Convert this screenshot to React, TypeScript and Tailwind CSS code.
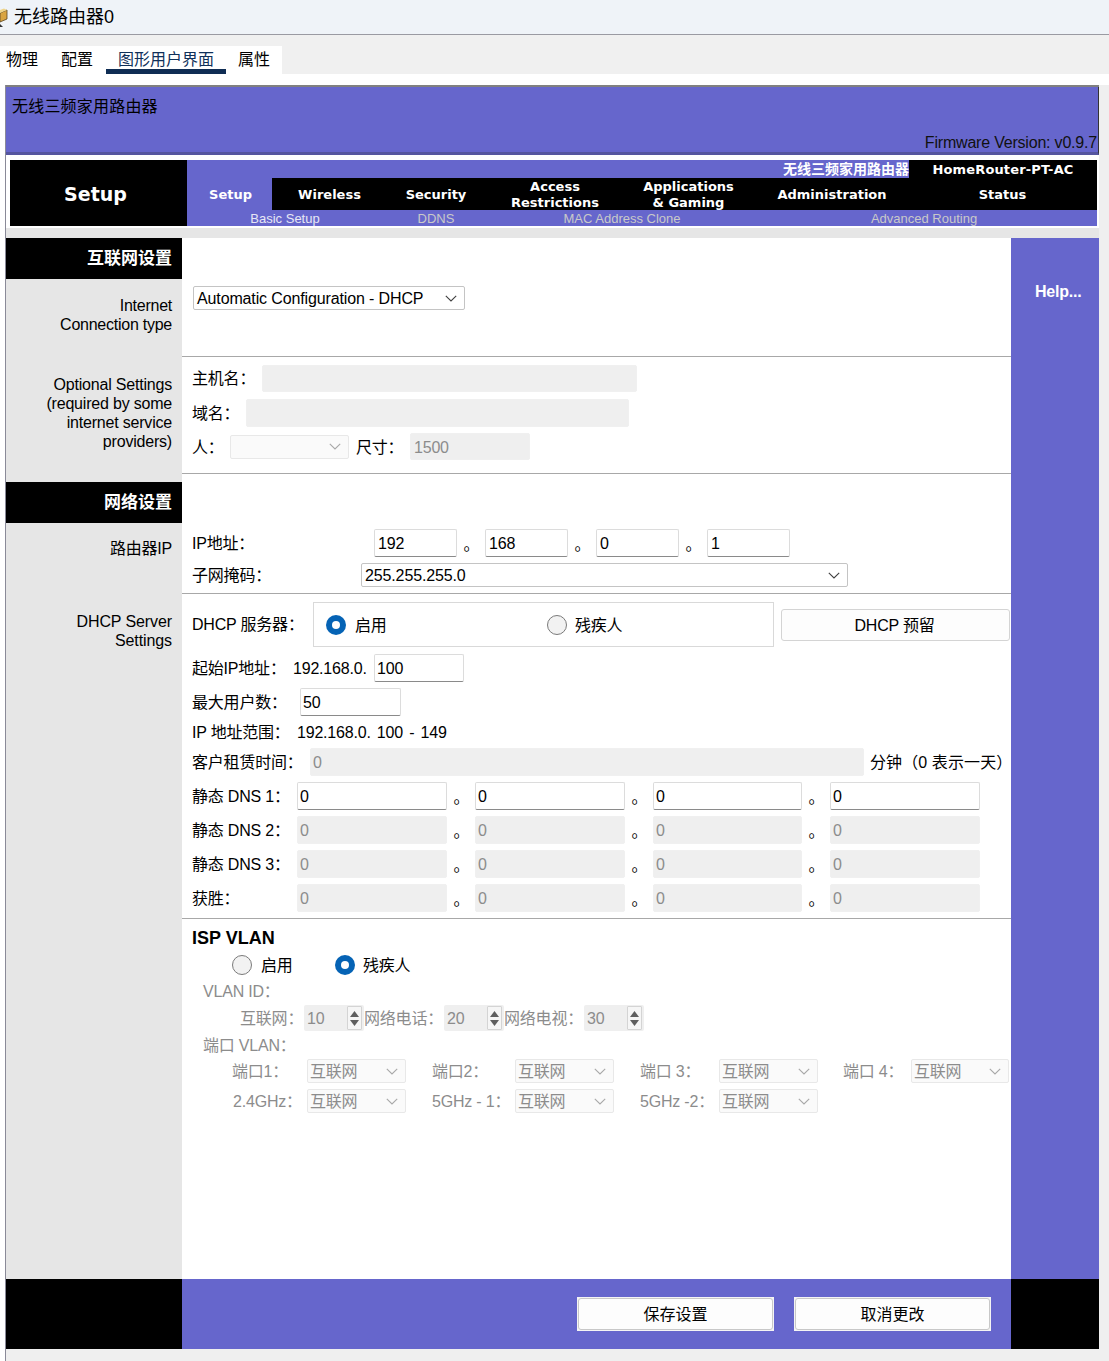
import React from "react";

const FONT = "[font-family:'Liberation_Sans','Noto_Sans_CJK_SC',sans-serif]";

function Field({ value, w, disabled, h = "h-[28px]", pad = "pl-[2px]" }: { value?: string; w: string; disabled?: boolean; h?: string; pad?: string }) {
  return (
    <input
      readOnly
      value={value ?? ""}
      className={`${w} ${h} ${pad} shrink-0 rounded-[2px] border pt-[2px] text-[16px] outline-none ${
        disabled
          ? "border-[#f0f0f0] bg-[#efefef] text-[#8c8c8c]"
          : "border-[#dcdcdc] border-b-[#8a8a8a] bg-white text-black"
      }`}
    />
  );
}

function Chevron({ color }: { color: string }) {
  return (
    <svg width="12" height="7" viewBox="0 0 12 7" fill="none" stroke={color} strokeWidth="1.1" className="shrink-0">
      <path d="M0.8 0.8 L6 6 L11.2 0.8" />
    </svg>
  );
}

function Select({ value, w, disabled, h = "h-[24px]" }: { value?: string; w: string; disabled?: boolean; h?: string }) {
  return (
    <div
      className={`${w} ${h} flex shrink-0 items-center justify-between rounded-[2px] border pr-[7px] ${
        disabled ? "border-[#e8e8e8] bg-[#fafafa] pl-[2px] text-[#8c8c8c]" : "border-[#c4c4c4] bg-white pl-[3px] tracking-[-0.13px] text-black"
      }`}
    >
      <span>{value}</span>
      <Chevron color={disabled ? "#a8a8a8" : "#404040"} />
    </div>
  );
}

function Radio({ on }: { on?: boolean }) {
  return on ? (
    <span className="flex h-[20px] w-[20px] shrink-0 items-center justify-center rounded-full bg-[#0563b5]">
      <span className="h-[8px] w-[8px] rounded-full bg-white" />
    </span>
  ) : (
    <span className="h-[20px] w-[20px] shrink-0 rounded-full border border-[#7a7a7a] bg-[#f2f2f2]" />
  );
}

function Dot() {
  return <span className="w-[28px] shrink-0 pl-[1px] pt-[4px] text-center leading-none">。</span>;
}

function DnsRow({ label, disabled, v = "0" }: { label: string; disabled?: boolean; v?: string }) {
  return (
    <div className="mt-[6px] flex h-[28px] items-center">
      <span className="w-[105px] shrink-0">{label}</span>
      <Field value={v} w="w-[150px]" disabled={disabled} />
      <Dot />
      <Field value={v} w="w-[150px]" disabled={disabled} />
      <Dot />
      <Field value={v} w="w-[149px]" disabled={disabled} />
      <Dot />
      <Field value={v} w="w-[150px]" disabled={disabled} />
    </div>
  );
}

function Spinner({ value }: { value: string }) {
  return (
    <div className="flex h-[26px] w-[60px] shrink-0 items-center justify-between rounded-[2px] bg-[#efefef] pl-[3px] pr-[2px] text-[#8c8c8c]">
      <span>{value}</span>
      <span className="flex h-[24px] w-[15px] flex-col items-center justify-center gap-[3px] rounded-[1px] border border-[#d4d4d4] bg-[#f6f6f6]">
        <svg width="9" height="6" viewBox="0 0 9 6" fill="#5f5f5f"><path d="M4.5 0 L9 6 L0 6 Z" /></svg>
        <svg width="9" height="6" viewBox="0 0 9 6" fill="#5f5f5f"><path d="M0 0 L9 0 L4.5 6 Z" /></svg>
      </span>
    </div>
  );
}

function SideHead({ children }: { children: React.ReactNode }) {
  return (
    <div className="flex h-[41px] items-center justify-end bg-black pr-[10px] text-[17px] font-bold tracking-normal text-white">{children}</div>
  );
}

function PortRow({ items, cls }: { items: [string, string][]; cls: string }) {
  const widths = ["w-[75px]", "w-[83px]", "w-[79px]", "w-[68px]"];
  const gaps = ["w-[26px]", "w-[26px]", "w-[25px]", "w-0"];
  return (
    <div className={`${cls} flex h-[24px] items-center pl-[40px] text-[#8c8c8c]`}>
      {items.map(([l, v], i) => (
        <React.Fragment key={l}>
          <span className={`${widths[i]} shrink-0`}>{l}</span>
          <Select value={v} w={i === 3 ? "w-[98px]" : "w-[99px]"} disabled />
          <span className={`${gaps[i]} shrink-0`} />
        </React.Fragment>
      ))}
    </div>
  );
}

function Tab({ w, children, active, cls = "" }: { w: string; children: React.ReactNode; active?: boolean; cls?: string }) {
  return (
    <div
      className={`${w} ${cls} flex shrink-0 items-center justify-center pt-[2px] text-center text-[13px] font-bold leading-[16px] tracking-normal text-white [font-family:'DejaVu_Sans',sans-serif] ${
        active ? "bg-[#6666cc]" : "bg-black"
      }`}
    >
      <span>{children}</span>
    </div>
  );
}

function FootButton({ children }: { children: React.ReactNode }) {
  return (
    <button className="h-[34px] w-[197px] bg-[#f4f4f4] p-[1px] text-[16px] tracking-normal">
      <span className="flex h-full w-full items-center justify-center rounded-[3px] border border-[#c8c8c8] bg-[#fdfdfd]">{children}</span>
    </button>
  );
}

export default function App() {
  return (
    <div className={`${FONT} h-[1361px] w-[1109px] overflow-hidden bg-white text-[16px] leading-[19px] tracking-[-0.2px] text-black`}>
      {/* window title */}
      <div className="flex h-[35px] items-center border-b border-[#9a9aa2] bg-[#eff3f8] text-[18px] tracking-normal">
        <svg width="14" height="22" viewBox="0 0 14 22" className="mt-[2px] shrink-0">
          <path d="M0 6 L7 3 L7 12 L0 15 Z" fill="#d9a441" stroke="#5a4520" strokeWidth="0.8" />
          <path d="M0 6 L7 3 L4 1.5 L0 3 Z" fill="#f0d58a" />
          <path d="M0 17 L3 20 L0 20 Z" fill="#333" />
        </svg>
        <span>无线路由器0</span>
      </div>

      {/* tabs */}
      <div className="h-[11px] bg-[#f0f0f0]" />
      <div className="flex h-[28px] bg-[#f0f0f0] tracking-normal">
        <div className="flex w-[282px] bg-white pl-[6px]">
          <span className="w-[55px] pt-[4px]">物理</span>
          <span className="w-[45px] pt-[4px]">配置</span>
          <span className="h-[28px] w-[120px] border-b-[5px] border-[#0f2d54] pl-[12px] pt-[4px] text-[#10305a]">图形用户界面</span>
          <span className="pl-[12px] pt-[4px]">属性</span>
        </div>
      </div>
      <div className="h-[11px] bg-white" />

      {/* device panel */}
      <div className="ml-[5px] h-[1276px] border-l border-[#8a8a98] bg-[#efefef]">
        <div className="w-[1093px] bg-white">
          <div className="border-t-2 border-[#808080]">
            <div className="flex h-[68px] flex-col justify-between border-b-[3px] border-r border-b-[#55559f] border-r-[#333] bg-[#6666cc] pl-[6px] pr-[1px]">
              <span className="pt-[10px] tracking-[0.2px]">无线三频家用路由器</span>
              <span className="self-end text-[#111]">Firmware Version: v0.9.7</span>
            </div>
          </div>

          {/* nav */}
          <div className="h-[73px] border-l-[4px] border-r-[2px] border-t-[5px] border-white">
            <div className="flex h-[66px]">
              <div className="flex w-[177px] shrink-0 items-center justify-center bg-black pr-[6px] pt-[3px] text-[19px] font-bold tracking-normal text-white [font-family:'DejaVu_Sans',sans-serif]">
                Setup
              </div>
              <div className="flex min-w-0 flex-1 flex-col bg-[#6666cc]">
                <div className="flex h-[18px] justify-end">
                  <div className="flex items-center bg-[#6666cc] text-[14px] font-bold tracking-normal text-white">无线三频家用路由器</div>
                  <div className="flex w-[188px] items-center justify-center bg-black text-[13px] font-bold tracking-[0.15px] text-white [font-family:'DejaVu_Sans',sans-serif]">
                    HomeRouter-PT-AC
                  </div>
                </div>
                <div className="flex h-[32px]">
                  <Tab w="w-[85px]" cls="pl-[2px]" active>Setup</Tab>
                  <Tab w="w-[115px]">Wireless</Tab>
                  <Tab w="w-[98px]">Security</Tab>
                  <Tab w="w-[140px]">Access<br />Restrictions</Tab>
                  <Tab w="w-[127px]">Applications<br />&amp; Gaming</Tab>
                  <Tab w="w-[160px]">Administration</Tab>
                  <Tab w="w-[185px]" cls="pr-[4px]">Status</Tab>
                </div>
                <div className="flex h-[16px] items-center pt-[1px] text-[13px] leading-[16px] tracking-normal text-[#c9c9c9]">
                  <span className="w-[196px] text-center text-[#e6e6f5]">Basic Setup</span>
                  <span className="w-[106px] text-center">DDNS</span>
                  <span className="w-[266px] text-center">MAC Address Clone</span>
                  <span className="w-[338px] text-center">Advanced Routing</span>
                </div>
              </div>
            </div>
          </div>
          <div className="h-[10px] bg-[#e6e6e6]" />

          {/* body */}
          <div className="flex h-[1041px]">
            <div className="w-[176px] shrink-0 bg-[#e6e6e6] text-right">
              <SideHead>互联网设置</SideHead>
              <div className="pr-[10px] pt-[17px] tracking-[-0.25px]">Internet<br />Connection type</div>
              <div className="pr-[10px] pt-[41px]">Optional Settings<br />(required by some<br />internet service<br />providers)</div>
              <div className="h-[31px]" />
              <SideHead>网络设置</SideHead>
              <div className="pr-[10px] pt-[16px]">路由器IP</div>
              <div className="pr-[10px] pt-[54px] tracking-[-0.1px]">DHCP Server<br />Settings</div>
            </div>

            <div className="min-w-0 flex-1 bg-white">
              <div className="h-[119px] border-b border-[#a8a8a8] pl-[11px] pt-[48px]">
                <Select value="Automatic Configuration - DHCP" w="w-[272px]" />
              </div>

              <div className="h-[117px] border-b border-[#a8a8a8] pl-[10px] pt-[8px]">
                <div className="flex h-[27px] items-center">
                  <span className="w-[70px]">主机名：</span>
                  <Field w="w-[375px]" h="h-[27px]" disabled />
                </div>
                <div className="mt-[7px] flex h-[28px] items-center">
                  <span className="w-[54px]">域名：</span>
                  <Field w="w-[383px]" disabled />
                </div>
                <div className="mt-[6px] flex h-[27px] items-center">
                  <span className="w-[38px] pt-[1px]">人：</span>
                  <Select w="w-[119px]" disabled />
                  <span className="w-[61px] shrink-0 pl-[7px] pt-[1px]">尺寸：</span>
                  <Field value="1500" w="w-[120px]" h="h-[27px]" pad="pl-[3px]" disabled />
                </div>
              </div>

              <div className="h-[120px] border-b border-[#a8a8a8] pl-[10px] pt-[55px]">
                <div className="flex h-[28px] items-center">
                  <span className="w-[182px] shrink-0">IP地址：</span>
                  <Field value="192" w="w-[83px]" pad="pl-[3px]" />
                  <Dot />
                  <Field value="168" w="w-[83px]" pad="pl-[3px]" />
                  <Dot />
                  <Field value="0" w="w-[83px]" pad="pl-[3px]" />
                  <Dot />
                  <Field value="1" w="w-[83px]" pad="pl-[3px]" />
                </div>
                <div className="mt-[6px] flex h-[24px] items-center">
                  <span className="w-[169px] shrink-0">子网掩码：</span>
                  <div className="tracking-[0.1px]">
                    <Select value="255.255.255.0" w="w-[487px]" />
                  </div>
                </div>
              </div>

              <div className="h-[325px] border-b border-[#a8a8a8] pl-[10px] pt-[8px]">
                <div className="flex h-[45px] items-center">
                  <span className="w-[121px] shrink-0">DHCP 服务器：</span>
                  <div className="flex h-[45px] w-[461px] shrink-0 items-center border border-[#d9d9d9] pl-[12px]">
                    <Radio on />
                    <span className="w-[201px] shrink-0 pl-[9px] pt-[1px]">启用</span>
                    <Radio />
                    <span className="pl-[8px] pt-[1px]">残疾人</span>
                  </div>
                  <button className="ml-[7px] h-[32px] w-[229px] shrink-0 rounded-[3px] border border-[#d4d4d4] bg-[#fdfdfd] pr-[2px] pt-[1px] text-[16px]">DHCP 预留</button>
                </div>
                <div className="mt-[7px] flex h-[28px] items-center">
                  <span className="w-[101px] shrink-0">起始IP地址：</span>
                  <span className="w-[81px] shrink-0">192.168.0.</span>
                  <Field value="100" w="w-[90px]" />
                </div>
                <div className="mt-[6px] flex h-[28px] items-center">
                  <span className="w-[108px] shrink-0">最大用户数：</span>
                  <Field value="50" w="w-[101px]" />
                </div>
                <div className="mt-[3px] flex h-[26px] items-center">
                  <span className="w-[105px] shrink-0">IP 地址范围：</span>
                  <span className="[word-spacing:2px]">192.168.0. 100 - 149</span>
                </div>
                <div className="mt-[3px] flex h-[28px] items-center">
                  <span className="w-[118px] shrink-0">客户租赁时间：</span>
                  <Field value="0" w="w-[554px]" disabled />
                  <span className="shrink-0 whitespace-nowrap pl-[6px] tracking-[0.1px]">分钟（0 表示一天）</span>
                </div>
                <DnsRow label="静态 DNS 1：" />
                <DnsRow label="静态 DNS 2：" disabled />
                <DnsRow label="静态 DNS 3：" disabled />
                <DnsRow label="获胜：" disabled />
              </div>

              <div className="pl-[10px] pt-[8px]">
                <div className="flex h-[22px] items-center text-[18px] font-bold tracking-normal">ISP VLAN</div>
                <div className="mt-[4px] flex h-[24px] items-center pl-[40px]">
                  <Radio />
                  <span className="w-[83px] shrink-0 pl-[9px]">启用</span>
                  <Radio on />
                  <span className="pl-[8px]">残疾人</span>
                </div>
                <div className="mt-[2px] flex h-[24px] items-center pl-[11px] text-[#8c8c8c]">VLAN ID：</div>
                <div className="mt-[2px] flex h-[26px] items-center pl-[48px] text-[#8c8c8c]">
                  <span className="w-[64px] shrink-0">互联网：</span>
                  <Spinner value="10" />
                  <span className="w-[80px] shrink-0">网络电话：</span>
                  <Spinner value="20" />
                  <span className="w-[80px] shrink-0">网络电视：</span>
                  <Spinner value="30" />
                </div>
                <div className="mt-[2px] flex h-[24px] items-center pl-[11px] text-[#8c8c8c]">端口 VLAN：</div>
                <PortRow
                  cls="mt-[2px]"
                  items={[["端口1：", "互联网"], ["端口2：", "互联网"], ["端口 3：", "互联网"], ["端口 4：", "互联网"]]}
                />
                <div className="mt-[6px] flex h-[24px] items-center pl-[41px] text-[#8c8c8c]">
                  <span className="w-[74px] shrink-0">2.4GHz：</span>
                  <Select value="互联网" w="w-[99px]" disabled />
                  <span className="w-[26px] shrink-0" />
                  <span className="w-[83px] shrink-0">5GHz - 1：</span>
                  <Select value="互联网" w="w-[99px]" disabled />
                  <span className="w-[26px] shrink-0" />
                  <span className="w-[79px] shrink-0">5GHz -2：</span>
                  <Select value="互联网" w="w-[99px]" disabled />
                </div>
              </div>
            </div>

            <div className="w-[88px] shrink-0 bg-[#6666cc] pl-[24px] pt-[44px] font-bold tracking-[-0.2px] text-white">Help...</div>
          </div>

          {/* footer */}
          <div className="flex h-[70px]">
            <div className="w-[176px] shrink-0 bg-black" />
            <div className="flex min-w-0 flex-1 items-center justify-end gap-[20px] bg-[#6666cc] pr-[20px]">
              <FootButton>保存设置</FootButton>
              <FootButton>取消更改</FootButton>
            </div>
            <div className="w-[88px] shrink-0 bg-black" />
          </div>
        </div>
      </div>
    </div>
  );
}
